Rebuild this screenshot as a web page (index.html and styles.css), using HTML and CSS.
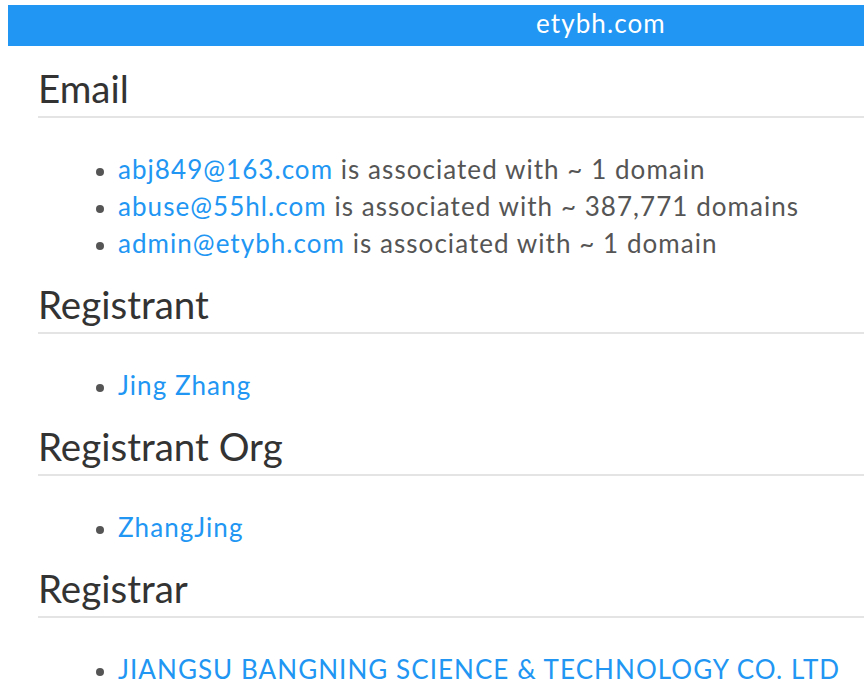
FILE: index.html
```html
<!DOCTYPE html>
<html>
<head>
<meta charset="utf-8">
<link rel="stylesheet" href="styles.css">
</head>
<body>
<header class="topbar"><span class="domain">etybh.com</span></header>
<main class="content">
  <section class="block">
    <h2 class="title">Email</h2>
    <ul class="items">
      <li><a class="link" href="#">abj849@163.com</a> is associated with ~ 1 domain</li>
      <li><a class="link" href="#">abuse@55hl.com</a> is associated with ~ 387,771 domains</li>
      <li><a class="link" href="#">admin@etybh.com</a> is associated with ~ 1 domain</li>
    </ul>
  </section>
  <section class="block">
    <h2 class="title">Registrant</h2>
    <ul class="items">
      <li><a class="link" href="#">Jing Zhang</a></li>
    </ul>
  </section>
  <section class="block">
    <h2 class="title">Registrant Org</h2>
    <ul class="items">
      <li><a class="link" href="#">ZhangJing</a></li>
    </ul>
  </section>
  <section class="block">
    <h2 class="title">Registrar</h2>
    <ul class="items">
      <li><a class="link" href="#">JIANGSU BANGNING SCIENCE &amp; TECHNOLOGY CO. LTD</a></li>
    </ul>
  </section>
</main>
</body>
</html>
```
FILE: styles.css
```css
html, body {
  margin: 0;
  padding: 0;
  background: #fff;
  overflow: hidden;
}
body {
  padding: 5px 0 0 8px;
  font-family: Lato, "Noto Sans", sans-serif;
  color: #555;
}
.topbar {
  background: #2196f3;
  height: 41px;
  padding-left: 528px;
}
.domain {
  display: block;
  color: #fff;
  font-size: 26px;
  line-height: 37px;
  letter-spacing: 1.1px;
}
.content {
  padding: 0 0 0 30px;
}
.title {
  margin: 21px 0 0 0;
  font-size: 38.5px;
  font-weight: 400;
  line-height: 43px;
  color: #333;
  padding-bottom: 6px;
  border-bottom: 2px solid #e4e4e4;
}
.items {
  margin: 33px 0 0 0;
  padding-left: 80px;
  list-style: none;
  font-size: 26px;
  letter-spacing: 1.05px;
  line-height: 37px;
}
.items li::before {
  content: "";
  display: inline-block;
  width: 8px;
  height: 8px;
  border-radius: 50%;
  background: #555;
  margin-left: -22px;
  margin-right: 14px;
  vertical-align: middle;
}
.link {
  color: #2196f3;
  text-decoration: none;
}
.block + .block .title {
  margin-top: 21px;
}
```
